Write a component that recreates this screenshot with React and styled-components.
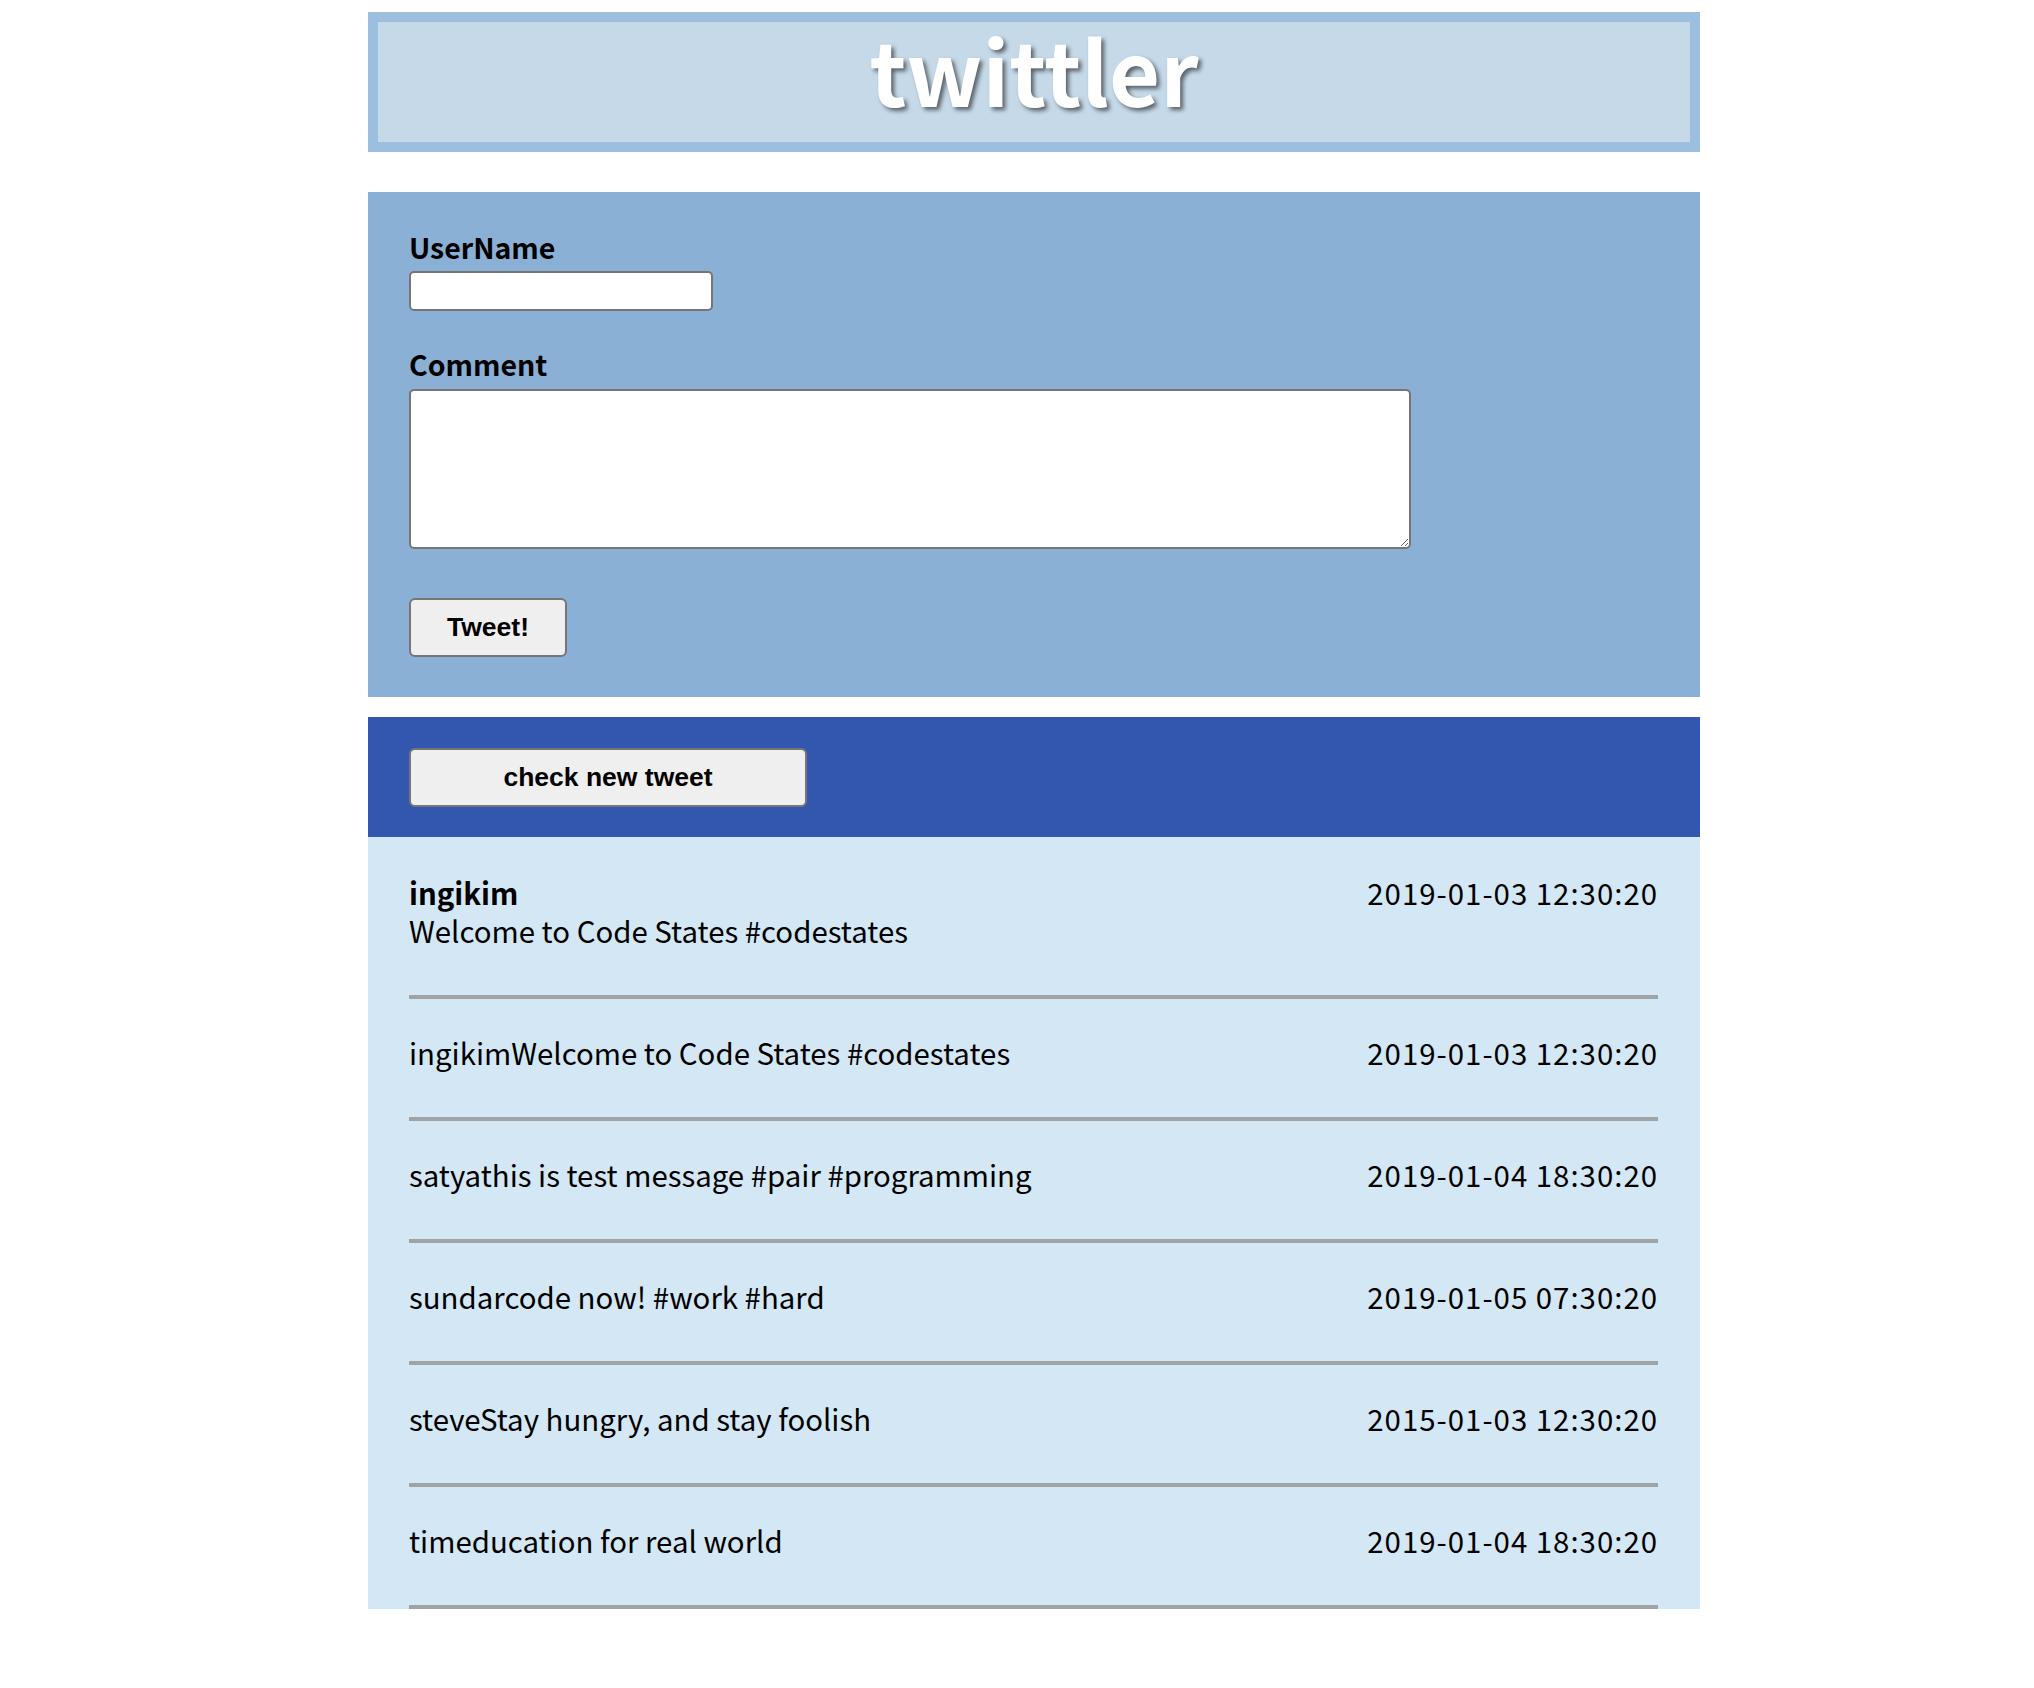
import React from "react";
import styled, { createGlobalStyle } from "styled-components";

const GlobalStyle = createGlobalStyle`
  html, body { margin: 0; padding: 0; background: #ffffff; }
  body { font-family: "Noto Sans CJK KR", "Noto Sans", sans-serif; color: #000; }
  * { box-sizing: border-box; }
`;

const Page = styled.div`
  display: flex;
  justify-content: center;
  padding: 12px 0 40px 34px;
`;

const Container = styled.div`
  width: 1332px;
  display: flex;
  flex-direction: column;
`;

const Header = styled.header`
  border: 10px solid #9cbfe0;
  background: #c5d9e8;
  height: 140px;
  display: flex;
  justify-content: center;
`;

const Title = styled.h1`
  margin: 0;
  font-family: "Noto Sans CJK KR", "Noto Sans", sans-serif;
  font-weight: 700;
  font-size: 88px;
  line-height: 94px;
  color: #ffffff;
  text-shadow: 3px 3px 4px rgba(0, 0, 0, 0.55);
`;

const FormPanel = styled.form`
  margin-top: 40px;
  background: #8ab0d5;
  padding: 40px 41px;
  display: flex;
  flex-direction: column;
  align-items: flex-start;
`;

const Label = styled.label`
  display: block;
  font-weight: 700;
  font-size: 28.5px;
  line-height: 30px;
  padding-bottom: 9px;
  margin-top: ${(p) => (p.$first ? "0" : "38px")};
`;

const TextInput = styled.input`
  width: 304px;
  height: 40px;
  border: 2px solid #767676;
  border-radius: 5px;
  background: #fff;
  font-size: 26px;
  padding: 2px 6px;
`;

const CommentArea = styled.textarea`
  width: 1002px;
  height: 160px;
  margin-top: 1px;
  border: 2px solid #767676;
  border-radius: 5px;
  background: #fff;
  font-size: 26px;
  resize: both;
`;

const Button = styled.button`
  width: ${(p) => p.$w}px;
  height: 59px;
  margin-top: ${(p) => p.$mt || 0}px;
  background: #efefef;
  border: 2px solid #767676;
  border-radius: 6px;
  font-family: "Liberation Sans", Arial, sans-serif;
  font-weight: 700;
  font-size: 26.5px;
  color: #000;
  cursor: pointer;
`;

const ActionBar = styled.div`
  margin-top: 20px;
  background: #3357ae;
  padding: 31px 41px 30px;
`;

const TweetList = styled.ul`
  list-style: none;
  margin: 0;
  padding: 0 42px 0 41px;
  background: #d4e7f5;
`;

const TweetRow = styled.li`
  display: flex;
  justify-content: space-between;
  align-items: flex-start;
  padding: 34px 0 46px;
  border-bottom: 4px solid #a0a3a6;
  font-size: 29.4px;
  line-height: 38px;
`;

const TweetBody = styled.div`
  display: flex;
  flex-direction: column;
  padding-top: 2px;
`;

const UserName = styled.span`
  font-weight: ${(p) => (p.$bold ? 700 : 400)};
`;

const TimeStamp = styled.span`
  white-space: nowrap;
  letter-spacing: 1px;
  padding-top: ${(p) => (p.$offset ? "2px" : "0")};
`;

const tweets = [
  { user: "ingikim", message: "Welcome to Code States #codestates", created: "2019-01-03 12:30:20" },
  { user: "satya", message: "this is test message #pair #programming", created: "2019-01-04 18:30:20" },
  { user: "sundar", message: "code now! #work #hard", created: "2019-01-05 07:30:20" },
  { user: "steve", message: "Stay hungry, and stay foolish", created: "2015-01-03 12:30:20" },
  { user: "tim", message: "education for real world", created: "2019-01-04 18:30:20" },
];

export default function App() {
  return (
    <>
      <GlobalStyle />
      <Page>
        <Container>
          <Header>
            <Title>twittler</Title>
          </Header>

          <FormPanel onSubmit={(e) => e.preventDefault()}>
            <Label $first htmlFor="username">UserName</Label>
            <TextInput id="username" type="text" />
            <Label htmlFor="comment">Comment</Label>
            <CommentArea id="comment" />
            <Button type="submit" $w={158} $mt={49}>Tweet!</Button>
          </FormPanel>

          <ActionBar>
            <Button type="button" $w={398}>check new tweet</Button>
          </ActionBar>

          <TweetList>
            <TweetRow>
              <TweetBody>
                <UserName $bold>ingikim</UserName>
                <span>Welcome to Code States #codestates</span>
              </TweetBody>
              <TimeStamp $offset>2019-01-03 12:30:20</TimeStamp>
            </TweetRow>
            {tweets.map((t, i) => (
              <TweetRow key={i}>
                <span>
                  <UserName>{t.user}</UserName>
                  {t.message}
                </span>
                <TimeStamp>{t.created}</TimeStamp>
              </TweetRow>
            ))}
          </TweetList>
        </Container>
      </Page>
    </>
  );
}
